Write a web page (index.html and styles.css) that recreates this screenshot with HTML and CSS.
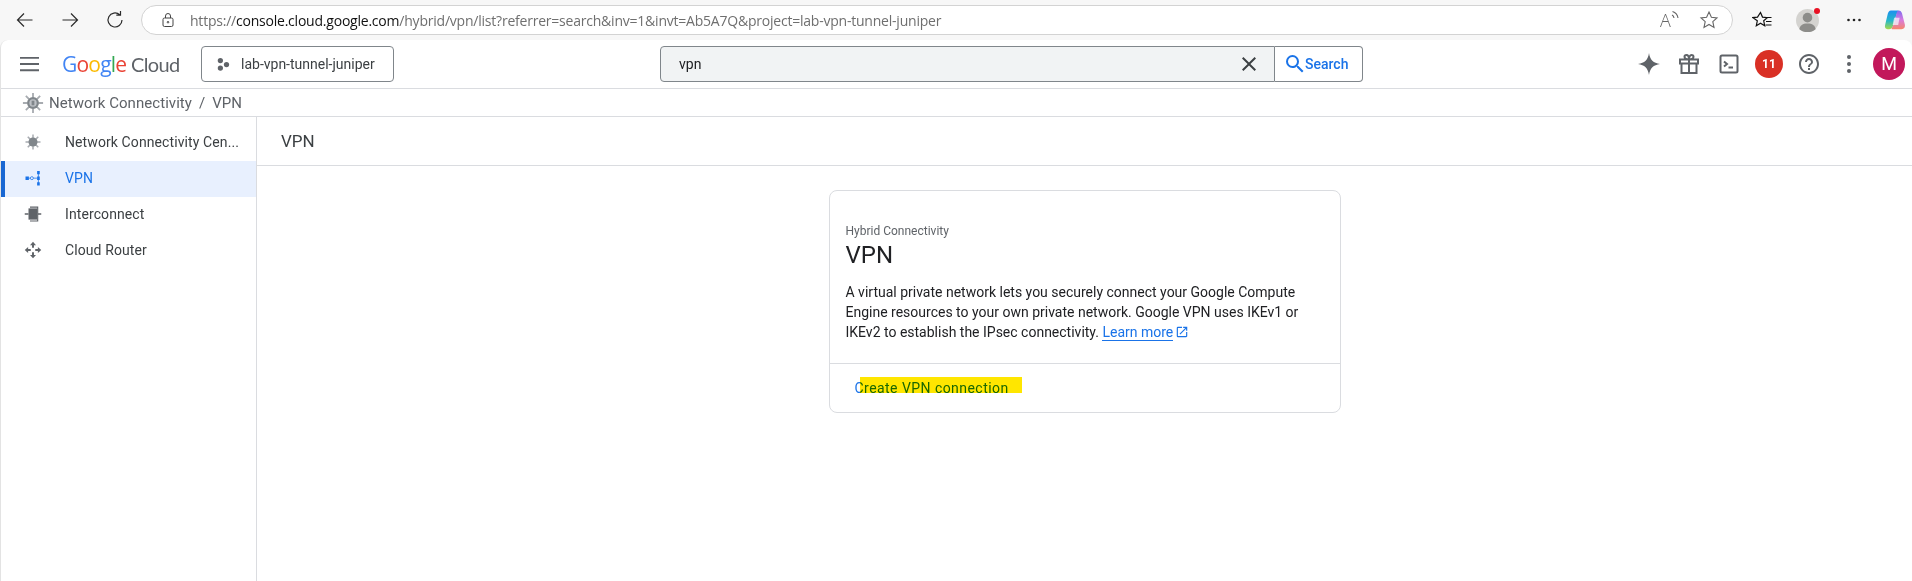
FILE: index.html
```html
<!DOCTYPE html>
<html lang="en">

<head>
    <meta charset="UTF-8">
    <meta name="viewport" content="width=device-width, initial-scale=1.0">
    <title>VPN - Google Cloud console</title>
    <link rel="stylesheet" href="styles.css">
</head>

<body>
    <!-- browser toolbar -->
    <div class="toolbar">
        <div class="nav-btns">
            <svg class="nav-icon" viewBox="0 0 20 20"><path d="M17.500 10H2.500M9 3.500L2.500 10 9 16.500" /></svg>
            <svg class="nav-icon" viewBox="0 0 20 20"><path d="M2.500 10h15M11 3.500l6.500 6.500-6.500 6.500" /></svg>
            <svg class="nav-icon" viewBox="0 0 20 20"><path d="M17 10a7 7 0 1 1-2.300-5.200M15.500 1v4.200h-4.200" /></svg>
        </div>
        <div class="url-bar">
            <svg class="lock" viewBox="0 0 16 16"><rect x="3" y="6" width="10" height="8.500" rx="1.500" /><path d="M5.500 6V4a2.500 2.500 0 0 1 5 0v2" /><circle cx="8" cy="10.200" r=".8" /></svg>
            <div class="url"><span>https://</span><b>console.cloud.google.com</b><span>/hybrid/vpn/list?referrer=search&amp;inv=1&amp;invt=Ab5A7Q&amp;project=lab-vpn-tunnel-juniper</span></div>
            <div class="read-aloud">A<svg viewBox="0 0 8 11"><path d="M1 5c1.200.6 1.800 1.500 2 3M1.500 1.500C4.500 2.500 6.500 4.500 7 8" /></svg></div>
            <svg class="url-star" viewBox="0 0 20 20"><path d="M10 2l2.400 5.300 5.600.6-4.200 3.800 1.200 5.700L10 14.500 5 17.400l1.200-5.700L2 7.900l5.600-.6z" /></svg>
        </div>
        <div class="tool-icons">
            <svg class="fav" viewBox="0 0 20 20"><path d="M8.500 2.500l2 4.600 4.800.5-3.600 3.200 1 4.900-4.200-2.500-4.200 2.500 1-4.900L.7 7.600l4.800-.5zM13 7.500h6.500M14 11.500h5.500M13.500 15h6" /></svg>
            <div class="profile"><i></i><svg viewBox="0 0 24 24"><circle cx="12" cy="9" r="5" /><path d="M3.500 21c.5-4 3.500-6 8.500-6s8 2 8.500 6c-2.300 2-5.200 3-8.500 3s-6.200-1-8.500-3z" /></svg></div>
            <svg class="more-h" viewBox="0 0 16 4"><circle cx="2.500" cy="2" r="1.300" /><circle cx="8" cy="2" r="1.300" /><circle cx="13.500" cy="2" r="1.300" /></svg>
            <svg class="copilot" viewBox="0 0 24 24">
                <defs>
                    <linearGradient id="cpLeft" x1="0" y1="0" x2="0" y2="1"><stop offset="0" stop-color="#1b8ff0" /><stop offset=".55" stop-color="#27b8c8" /><stop offset="1" stop-color="#a6d94a" /></linearGradient>
                    <linearGradient id="cpRight" x1="0" y1="0" x2="0" y2="1"><stop offset="0" stop-color="#7c6cf0" /><stop offset=".5" stop-color="#d77be0" /><stop offset="1" stop-color="#f7866a" /></linearGradient>
                </defs>
                <path d="M7.500 1.500H15c1 0 .8.800.3 1.500-2 3-3 7-4 11-.8 3.500-1.800 8-5.800 8H4C1.500 22 .5 20 1.200 17.500L4.200 5c.5-2 1.500-3.500 3.300-3.500z" fill="url(#cpLeft)" />
                <path d="M16 1.500c2 0 3 1.200 3.600 3.200l3.100 12c.6 2.800-.6 5.300-3.700 5.300H9c-1 0-.8-.7-.3-1.500 2-3 3-7 4-11 .8-3.500 1-8 3.300-8z" fill="url(#cpRight)" />
                <path d="M11 9.500h6l-1.500 8H9.500z" fill="#f4f4f8" opacity=".75" />
            </svg>
        </div>
    </div>

    <div class="page">
        <!-- console header -->
        <div class="header">
            <svg class="menu" viewBox="0 0 20 16"><path d="M0 1.500h20M0 8h20M0 14.500h20" /></svg>
            <div class="logo"><span class="blue">G</span><span class="red">o</span><span class="yellow">o</span><span class="blue">g</span><span class="green">l</span><span class="red">e</span> <span class="cloud">Cloud</span></div>
            <div class="project">
                <svg viewBox="0 0 16 16"><circle cx="5" cy="3.500" r="3" /><circle cx="5" cy="12" r="3" /><circle cx="12" cy="8" r="3" /></svg>
                lab-vpn-tunnel-juniper
            </div>
            <div class="search">
                <div class="search-input">
                    <span>vpn</span>
                    <svg viewBox="0 0 24 24"><path d="M19 6.410L17.590 5 12 10.590 6.410 5 5 6.410 10.590 12 5 17.590 6.410 19 12 13.410 17.590 19 19 17.590 13.410 12z" /></svg>
                </div>
                <div class="search-btn">
                    <svg viewBox="0 0 24 24"><path d="M15.500 14h-.79l-.28-.27A6.470 6.470 0 0 0 16 9.500 6.500 6.500 0 1 0 9.500 16c1.610 0 3.090-.59 4.230-1.570l.27.28v.79l5 4.990L20.490 19l-4.990-5zm-6 0C7.010 14 5 11.990 5 9.500S7.010 5 9.500 5 14 7.010 14 9.500 11.990 14 9.500 14z" /></svg>
                    Search
                </div>
            </div>
            <div class="actions">
                <div class="action"><svg viewBox="0 0 24 24"><path d="M12 1c.8 6.500 4.500 10.200 11 11-6.500.8-10.200 4.500-11 11-.8-6.500-4.500-10.200-11-11 6.500-.8 10.200-4.500 11-11z" /></svg></div>
                <div class="action"><svg class="line" viewBox="0 0 24 24"><path d="M3 7.500h18v4H3zM4.500 11.500V21h15v-9.500M12 7.500V21M12 7.500C9 7.500 7.500 6.500 7.500 4.800 7.500 3.500 8.500 3 9.500 3 11 3 12 5 12 7.500zM12 7.500c3 0 4.500-1 4.500-2.700 0-1.300-1-1.800-2-1.800C13 3 12 5 12 7.500z" /></svg></div>
                <div class="action"><svg class="line" viewBox="0 0 24 24"><rect x="3.500" y="3.500" width="17" height="17" rx="1.500" /><path d="M7 9.500l3 2.500-3 2.500M11.500 15.500H16" /></svg></div>
                <div class="action"><span class="badge">11</span></div>
                <div class="action"><svg viewBox="0 0 24 24"><path d="M11 18h2v-2h-2v2zm1-16C6.480 2 2 6.480 2 12s4.480 10 10 10 10-4.480 10-10S17.520 2 12 2zm0 18c-4.410 0-8-3.590-8-8s3.590-8 8-8 8 3.590 8 8-3.590 8-8 8zm0-14c-2.210 0-4 1.790-4 4h2c0-1.100.9-2 2-2s2 .9 2 2c0 2-3 1.750-3 5h2c0-2.250 3-2.500 3-5 0-2.210-1.790-4-4-4z" /></svg></div>
                <div class="action"><svg viewBox="0 0 24 24"><circle cx="12" cy="5" r="2" /><circle cx="12" cy="12" r="2" /><circle cx="12" cy="19" r="2" /></svg></div>
                <div class="action"><span class="avatar">M</span></div>
            </div>
        </div>

        <!-- breadcrumb -->
        <div class="crumbs">
            <svg class="hub" viewBox="0 0 24 24">
                <path class="rays" d="M12 1v5M12 18v5M1 12h5M18 12h5M4.200 4.200l3.500 3.500M16.300 16.300l3.500 3.500M19.800 4.200l-3.500 3.500M7.700 16.300l-3.500 3.500" />
                <circle cx="12" cy="12" r="6.500" />
                <circle class="hole" cx="12" cy="12" r="4" />
                <rect x="10.500" y="9.500" width="3" height="5" />
            </svg>
            <span>Network Connectivity</span>
            <span class="slash">/</span>
            <span>VPN</span>
        </div>

        <div class="content">
            <!-- left menu -->
            <div class="sidebar">
                <div class="item">
                    <svg class="hub" viewBox="0 0 24 24">
                        <path class="rays" d="M12 2v6M12 16v6M2 12h6M16 12h6M5 5l3.500 3.500M15.500 15.500L19 19M19 5l-3.500 3.500M8.500 15.500L5 19" />
                        <circle cx="12" cy="12" r="6" />
                    </svg>
                    <span>Network Connectivity Cen...</span>
                </div>
                <div class="item active">
                    <svg viewBox="0 0 24 24"><path d="M2 10h4.500v4.500H2zM17.500 2.500H21V7h-3.500zM17.500 10H21v4.500h-3.500zM17.500 17.500H21V22h-3.500z" /><path class="thin" d="M6 12.200h2.500M12.500 12.200h5M19.200 5v14" /><circle class="thin" cx="10.500" cy="12.200" r="2" /></svg>
                    <span>VPN</span>
                </div>
                <div class="item">
                    <svg viewBox="0 0 24 24"><path d="M6 4.500h11.500v15H6z" /><path d="M1 11h5v2H1zM8 2h11v20H8v-1.500h9.500v-17H8zM19 11h4v2h-4z" /></svg>
                    <span>Interconnect</span>
                </div>
                <div class="item">
                    <svg viewBox="0 0 24 24"><path d="M12 1l4 4.500h-2.700V9h-2.600V5.500H8zM12 23l-4-4.500h2.700V15h2.600v3.500H16zM1 12l4.500-4v2.700H9v2.600H5.500V16zM23 12l-4.500 4v-2.700H15v-2.600h3.500V8z" /></svg>
                    <span>Cloud Router</span>
                </div>
            </div>

            <div class="main">
                <div class="page-title">VPN</div>
                <div class="card">
                    <div class="card-body">
                        <div class="eyebrow">Hybrid Connectivity</div>
                        <div class="card-title">VPN</div>
                        <p class="desc">A virtual private network lets you securely connect your Google Compute Engine resources to your own private network. Google VPN uses IKEv1 or IKEv2 to establish the IPsec connectivity. <a class="learn" href="javascript:;">Learn more</a><svg class="ext" viewBox="0 0 24 24"><path d="M19 19H5V5h7V3H5a2 2 0 0 0-2 2v14a2 2 0 0 0 2 2h14c1.100 0 2-.9 2-2v-7h-2v7zM14 3v2h3.590l-9.830 9.830 1.410 1.410L19 6.410V10h2V3h-7z" /></svg></p>
                    </div>
                    <div class="card-foot">
                        <a class="create" href="javascript:;">Create VPN connection<span class="marker"></span></a>
                    </div>
                </div>
            </div>
        </div>
    </div>
</body>

</html>
```

FILE: styles.css
```css
* {
    margin: 0;
    padding: 0;
    box-sizing: border-box;
}

a {
    text-decoration: none;
}

body {
    width: 1912px;
    height: 581px;
    overflow: hidden;
    background-color: #f7f7f7;
    font-family: Roboto, "Liberation Sans", sans-serif;
    font-size: 14px;
    color: #202124;
    display: flex;
    flex-direction: column;
}

/* browser toolbar */
.toolbar {
    height: 40px;
    flex: none;
    display: flex;
    align-items: center;
}

.nav-btns {
    width: 141px;
    flex: none;
    display: flex;
    padding-left: 15px;
    gap: 25px;
}

.nav-icon {
    width: 20px;
    height: 20px;
    fill: none;
    stroke: #2b2b2b;
    stroke-width: 1.200;
}

.url-bar {
    width: 1592px;
    height: 30px;
    flex: none;
    display: flex;
    align-items: center;
    background-color: #ffffff;
    border: 1px solid #d3d3d3;
    border-radius: 15px;
    padding-left: 18px;
}

.lock {
    width: 16px;
    height: 16px;
    fill: none;
    stroke: #444444;
    stroke-width: 1;
}

.url {
    margin-left: 14px;
    width: 1470px;
    flex: none;
    font-family: "Open Sans", "Liberation Sans", sans-serif;
    font-size: 14px;
    letter-spacing: -.22px;
    color: #6f6f6f;
    white-space: nowrap;
}

.url b {
    font-weight: 400;
    color: #111111;
}

.read-aloud {
    width: 39px;
    flex: none;
    font-family: "Open Sans", sans-serif;
    font-size: 18px;
    font-weight: 300;
    line-height: 20px;
    color: #666666;
    display: flex;
}

.read-aloud svg {
    width: 8px;
    height: 11px;
    fill: none;
    stroke: #666666;
    stroke-width: 1.100;
}

.url-star {
    width: 20px;
    height: 20px;
    flex: none;
    fill: none;
    stroke: #666666;
    stroke-width: 1.100;
}

.tool-icons {
    flex: 1;
    display: flex;
    align-items: center;
    padding-left: 19px;
}

.fav {
    width: 20px;
    height: 20px;
    fill: none;
    stroke: #111111;
    stroke-width: 1.200;
}

.profile {
    position: relative;
    width: 23px;
    height: 23px;
    margin-left: 24px;
    border-radius: 50%;
    background-color: #d4d3d0;
}

.profile svg {
    width: 23px;
    height: 23px;
    fill: #8d8d8a;
    display: block;
}

.profile i {
    position: absolute;
    top: -1px;
    right: -1px;
    width: 6px;
    height: 6px;
    border-radius: 50%;
    background-color: #e81123;
}

.more-h {
    width: 16px;
    height: 4px;
    margin-left: 27px;
    fill: #222222;
}

.copilot {
    width: 22px;
    height: 22px;
    margin-left: 22px;
}

/* console page */
.page {
    flex: 1;
    min-height: 0;
    display: flex;
    flex-direction: column;
    background-color: #ffffff;
    border-left: 1px solid #e3e3e3;
    border-radius: 8px 8px 0 0;
}

.header {
    height: 49px;
    flex: none;
    display: flex;
    align-items: center;
    padding-left: 19px;
    border-bottom: 1px solid #dadce0;
}

.menu {
    width: 19px;
    height: 16px;
    fill: none;
    stroke: #5f6368;
    stroke-width: 2;
}

.logo {
    width: 139px;
    margin-left: 23px;
    font-family: "Open Sans", sans-serif;
    font-size: 21px;
    letter-spacing: -.8px;
    white-space: nowrap;
}

.blue { color: #4285f4; }
.red { color: #ea4335; }
.yellow { color: #fbbc05; }
.green { color: #34a853; }

.cloud {
    font-family: Lato, sans-serif;
    font-size: 20px;
    letter-spacing: -.6px;
    color: #5f6368;
}

.project {
    width: 193px;
    height: 36px;
    flex: none;
    display: flex;
    align-items: center;
    gap: 11px;
    padding-left: 14px;
    border: 1px solid #80868b;
    border-radius: 4px;
    color: #3c4043;
}

.project svg {
    width: 14px;
    height: 15px;
    fill: #5f6368;
}

.search {
    width: 703px;
    height: 36px;
    margin-left: 266px;
    flex: none;
    display: flex;
}

.search-input {
    flex: 1;
    display: flex;
    align-items: center;
    justify-content: space-between;
    padding: 0 13px 0 18px;
    background-color: #f1f3f4;
    border: 1px solid #80868b;
    border-radius: 4px 0 0 4px;
}

.search-input svg {
    width: 24px;
    height: 24px;
    fill: #3c4043;
}

.search-btn {
    width: 88px;
    flex: none;
    display: flex;
    align-items: center;
    padding-left: 8px;
    border: 1px solid #80868b;
    border-left: none;
    border-radius: 0 4px 4px 0;
    font-weight: 500;
    color: #1a73e8;
}

.search-btn svg {
    width: 24px;
    height: 24px;
    margin-right: -2px;
    fill: #1a73e8;
}

.actions {
    display: flex;
    margin-left: auto;
    padding-right: 3px;
}

.action {
    width: 40px;
    height: 40px;
    display: flex;
    align-items: center;
    justify-content: center;
}

.action svg {
    width: 24px;
    height: 24px;
    fill: #5f6368;
}

.action .line {
    fill: none;
    stroke: #5f6368;
    stroke-width: 2;
}

.badge {
    width: 28px;
    height: 28px;
    border-radius: 50%;
    background-color: #d93025;
    color: #ffffff;
    font-size: 12px;
    font-weight: 700;
    line-height: 28px;
    text-align: center;
}

.avatar {
    width: 32px;
    height: 32px;
    border-radius: 50%;
    background-color: #c2185b;
    color: #ffffff;
    font-size: 18px;
    line-height: 32px;
    text-align: center;
}

.crumbs {
    height: 28px;
    flex: none;
    display: flex;
    align-items: center;
    padding-left: 21px;
    border-bottom: 1px solid #dadce0;
    font-size: 15px;
    letter-spacing: .05px;
    color: #5f6368;
}

.crumbs .hub {
    width: 22px;
    height: 22px;
    margin-right: 5px;
    fill: #80868b;
}

.slash {
    margin: 0 7px;
}

.hub .rays {
    fill: none;
    stroke: #a8acb1;
    stroke-width: 2;
}

.hub .hole {
    fill: #bdc1c6;
}

.content {
    flex: 1;
    min-height: 0;
    display: flex;
}

/* left menu */
.sidebar {
    width: 256px;
    flex: none;
    padding-top: 8px;
    border-right: 1px solid #dadce0;
}

.item {
    height: 36px;
    display: flex;
    align-items: center;
    gap: 23px;
    padding: 0 0 2px 23px;
    letter-spacing: .1px;
    color: #3c4043;
}

.item svg {
    width: 18px;
    height: 18px;
    flex: none;
    fill: #5f6368;
}

.item .hub {
    fill: #80868b;
}

.item.active {
    background-color: #e8f0fe;
    box-shadow: inset 4px 0 0 #1967d2;
    color: #1a73e8;
}

.item.active svg {
    fill: #1a73e8;
}

.item .thin {
    fill: none;
    stroke: #1a73e8;
    stroke-width: 1;
}

.main {
    flex: 1;
}

.page-title {
    height: 49px;
    padding-left: 24px;
    border-bottom: 1px solid #dadce0;
    font-size: 17px;
    line-height: 48px;
    color: #3c4043;
}

.card {
    width: 512px;
    height: 223px;
    margin: 24px auto 0;
    border: 1px solid #dadce0;
    border-radius: 8px;
}

.card-body {
    height: 173px;
    padding: 32px 16px 0;
    border-bottom: 1px solid #dadce0;
}

.eyebrow {
    font-size: 12px;
    line-height: 16px;
    color: #5f6368;
}

.card-title {
    font-size: 24px;
    line-height: 32px;
}

.desc {
    margin-top: 11px;
    line-height: 20px;
}

.learn {
    color: #1a73e8;
    border-bottom: 1px solid #1a73e8;
}

.ext {
    width: 14px;
    height: 14px;
    margin-left: 2px;
    vertical-align: -2px;
    fill: #1a73e8;
}

.card-foot {
    padding: 14px 0 0 25px;
}

.create {
    position: relative;
    display: inline-block;
    line-height: 20px;
    letter-spacing: .45px;
    color: #1a73e8;
}

/* yellow highlighter painted over the screenshot */
.marker {
    position: absolute;
    left: 5px;
    top: -1px;
    width: 162px;
    height: 16px;
    background-color: #ffe600;
    mix-blend-mode: multiply;
}
```
